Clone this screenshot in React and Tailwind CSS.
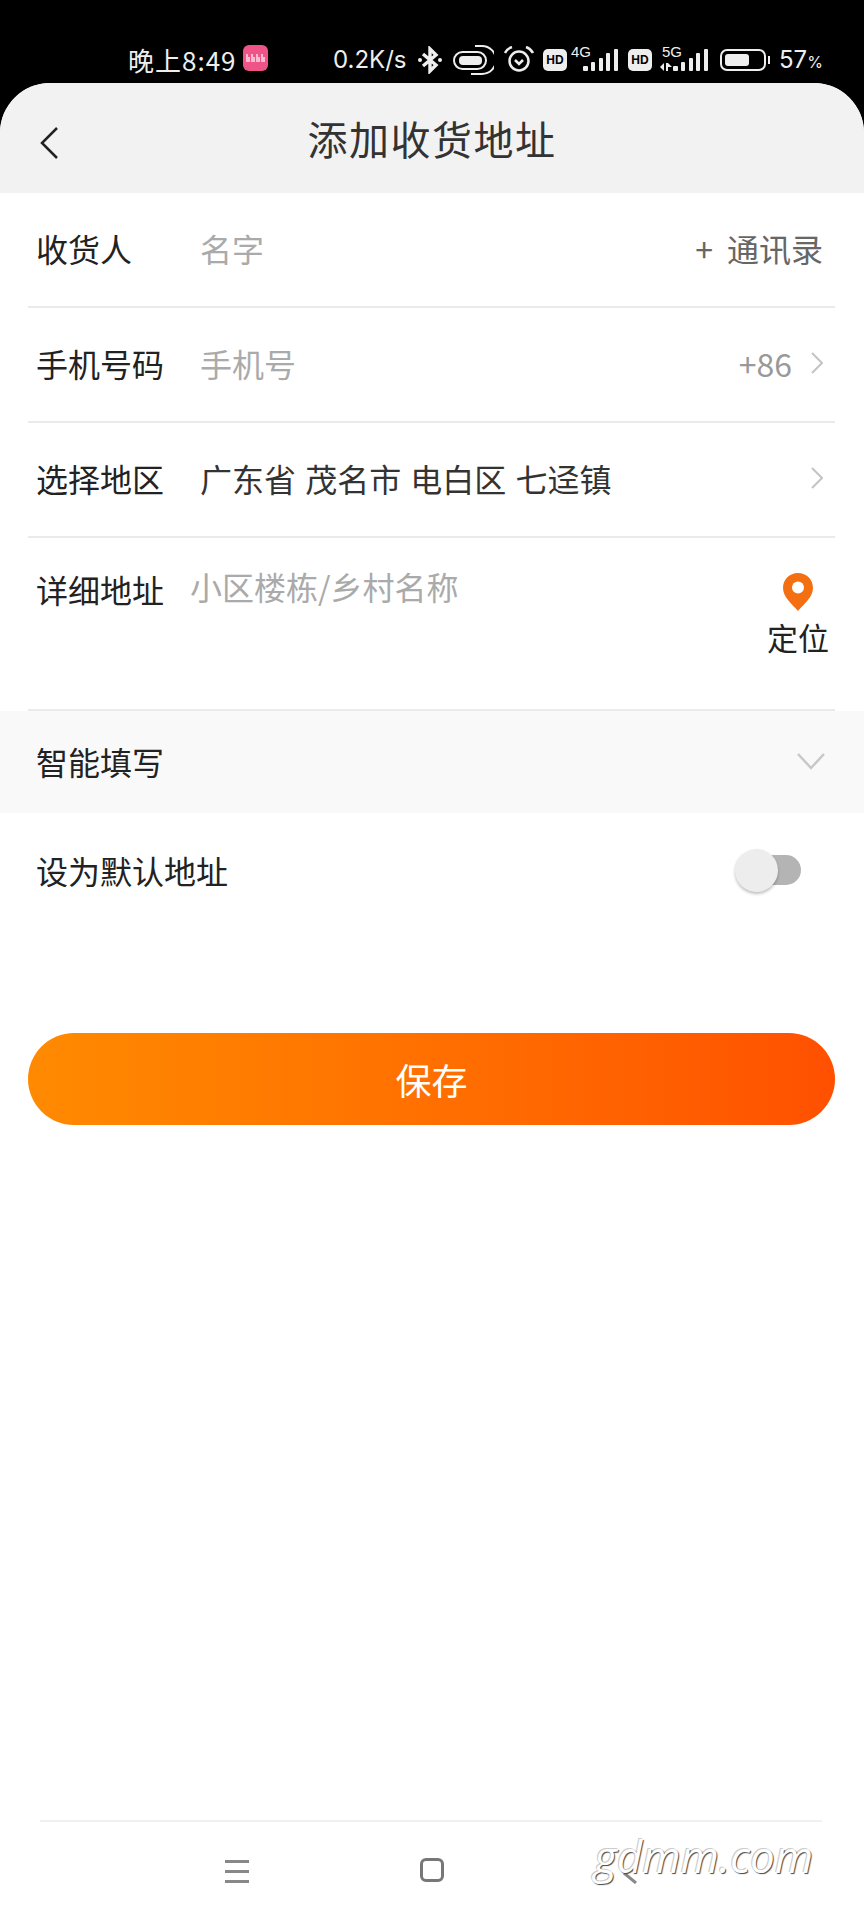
import React from "react";

const font = { fontFamily: '"Noto Sans CJK SC", sans-serif' };

const Signal = () => (
  <svg width="36" height="24" viewBox="0 0 36 24" fill="#eee">
    <rect x="0" y="18" width="5" height="5" rx="1" />
    <rect x="8" y="14" width="4" height="9" rx="1" />
    <rect x="16" y="10" width="4" height="13" rx="1" />
    <rect x="23" y="5" width="4" height="18" rx="1" />
    <rect x="31" y="1" width="4" height="22" rx="1" />
  </svg>
);

const HdBadge = () => (
  <div className="w-[24px] h-[22px] rounded-[5px] bg-[#eee] flex items-center justify-center text-[12px] font-bold text-black font-['Liberation_Sans']">
    HD
  </div>
);

const StatusBar = () => (
  <div className="h-[83px] flex items-start pt-[45px] pl-[128px] text-[#eee] shrink-0">
    <span className="text-[26px] leading-[30px] tracking-[1px] w-[115px] whitespace-nowrap" style={font}>晚上8:49</span>
    <svg width="25" height="26" viewBox="0 0 25 26">
      <rect width="25" height="26" rx="6" fill="#ef5488" />
      <path d="M4 17 V9 M6 17 V12 M9 17 V9 M11 17 V12 M14 17 V9 M16 17 V12 M19 17 V9 M21 17 V12" stroke="#fff" strokeWidth="1.2" fill="none" />
    </svg>
    <span className="ml-[65px] w-[85px] text-[24px] leading-[30px] font-['Inter']">0.2K/s</span>
    <svg className="-ml-[1px] mt-[1px]" width="26" height="28" viewBox="0 0 24 28" fill="none" stroke="#eee" strokeWidth="3.4">
      <path d="M5 8 L18 19 L12 25 V3 L18 9 L5 20" />
      <circle cx="2" cy="14" r="2" fill="#eee" stroke="none" />
      <circle cx="22" cy="14" r="2" fill="#eee" stroke="none" />
    </svg>
    <svg className="ml-[10px]" width="41" height="30" viewBox="0 0 41 30" fill="none" stroke="#eee" strokeWidth="2">
      <rect x="1" y="7" width="32" height="17" rx="8.5" />
      <rect x="6" y="11" width="23" height="9" rx="4" fill="#eee" stroke="none" />
      <path d="M22 1 H29 A13 13 0 0 1 29 29 H18" />
    </svg>
    <svg className="ml-[10px] mt-[1px]" width="30" height="27" viewBox="0 0 30 27" fill="none" stroke="#eee" strokeWidth="2.5">
      <circle cx="15" cy="15" r="9.5" />
      <path d="M1 7 C3 3 5 2 8 1 M29 7 C27 3 25 2 22 1" />
      <path d="M11 14 L15 18 L19 14" />
    </svg>
    <div className="ml-[9px] mt-[4px]"><HdBadge /></div>
    <div className="relative w-[48px] h-[28px] ml-[4px]">
      <span className="absolute left-0 top-0 text-[15px] leading-[14px] font-['Liberation_Sans']">4G</span>
      <div className="absolute left-[12px] top-[3px]"><Signal /></div>
    </div>
    <div className="ml-[9px] mt-[4px]"><HdBadge /></div>
    <div className="relative w-[53px] h-[28px] ml-[4px]">
      <span className="absolute left-[6px] top-0 text-[15px] leading-[14px] font-['Liberation_Sans']">5G</span>
      <svg className="absolute left-[4px] top-[18px]" width="13" height="8" viewBox="0 0 13 8" fill="#eee">
        <path d="M0 4 L4 0 V8 Z M6 0 H8 L12 4 L8 4 V8 H6 Z" />
      </svg>
      <div className="absolute left-[17px] top-[3px]"><Signal /></div>
    </div>
    <div className="ml-[11px] mt-[4px] w-[46px] h-[22px] rounded-[7px] border-2 border-[#eee] p-[3px]">
      <div className="w-[24px] h-full rounded-[3px] bg-[#eee]"></div>
    </div>
    <div className="ml-[2px] mt-[11px] w-[2px] h-[8px] bg-[#eee]"></div>
    <span className="ml-[9px] text-[24px] leading-[30px] font-['Inter'] whitespace-nowrap">57<span className="text-[16px]">%</span></span>
  </div>
);

const Chevron = () => (
  <svg width="12" height="22" viewBox="0 0 12 22" fill="none" stroke="#c4c4c4" strokeWidth="2">
    <path d="M1 1 L11 11 L1 21" />
  </svg>
);

const FormRow = ({ label, children }) => (
  <div className="h-[115px] ml-[28px] mr-[29px] border-b-2 border-[#eaeaea] flex items-center pl-[8px] pr-[12px] pb-[4px]">
    <span className="w-[164px] text-[#222] text-[32px] whitespace-nowrap">{label}</span>
    {children}
  </div>
);

const App = () => {
  return (
    <div className="relative w-[864px] h-[1920px] bg-black flex flex-col overflow-hidden" style={font}>
      <StatusBar />

      <div className="flex-1 bg-white rounded-t-[50px] overflow-hidden flex flex-col">
        {/* Header */}
        <div className="h-[110px] shrink-0 bg-[#f2f2f2] flex items-center justify-center relative">
          <svg className="absolute left-[40px] top-[44px]" width="18" height="32" viewBox="0 0 18 32" fill="none" stroke="#222" strokeWidth="2.5">
            <path d="M17 1 L2 16 L17 31" />
          </svg>
          <span className="text-[40px] text-[#333] tracking-[1.5px]">添加收货地址</span>
        </div>

        <FormRow label="收货人">
          <span className="text-[32px] text-[#aaa] flex-1">名字</span>
          <span className="text-[32px] text-[#666] mr-[14px]">+</span>
          <span className="text-[32px] text-[#666]">通讯录</span>
        </FormRow>

        <FormRow label="手机号码">
          <span className="text-[32px] text-[#aaa] flex-1">手机号</span>
          <span className="text-[32px] text-[#999] mr-[19px]">+86</span>
          <Chevron />
        </FormRow>

        <FormRow label="选择地区">
          <span className="text-[32px] text-[#333] flex-1 [word-spacing:2px]">广东省 茂名市 电白区 七迳镇</span>
          <Chevron />
        </FormRow>

        {/* Detail address */}
        <div className="h-[173px] ml-[28px] mr-[29px] border-b-2 border-[#eaeaea] flex items-start pl-[8px] pr-[6px] pt-[27px]">
          <span className="w-[154px] text-[#222] text-[32px]">详细地址</span>
          <span className="text-[32px] text-[#aaa] flex-1 leading-[46px] -mt-[2px]">小区楼栋/乡村名称</span>
          <div className="flex flex-col items-center w-[62px]">
            <svg className="mt-[8px]" width="30" height="38" viewBox="0 0 30 38">
              <path d="M15 0 C6.5 0 0 6.5 0 15 C0 24 9 31 15 38 C21 31 30 24 30 15 C30 6.5 23.5 0 15 0 Z" fill="#f36f12" />
              <circle cx="15" cy="14.5" r="6" fill="#fff" />
            </svg>
            <span className="text-[31px] text-[#222] leading-[44px] mt-[4px] whitespace-nowrap">定位</span>
          </div>
        </div>

        {/* Smart fill */}
        <div className="h-[102px] shrink-0 bg-[#f9f9f9] flex items-center justify-between pl-[36px] pr-[39px] pb-[3px]">
          <span className="text-[32px] text-[#222]">智能填写</span>
          <svg width="28" height="18" viewBox="0 0 28 18" fill="none" stroke="#c8c8c8" strokeWidth="2.5">
            <path d="M1 2 L14 16 L27 2" />
          </svg>
        </div>

        {/* Default address */}
        <div className="h-[118px] shrink-0 flex items-center justify-between pl-[36px] pr-[63px] pb-[4px]">
          <span className="text-[32px] text-[#222]">设为默认地址</span>
          <div className="relative w-[65px] h-[30px] rounded-full bg-[#b4b4b4]">
            <div className="absolute -left-[1px] -top-[6px] w-[43px] h-[43px] rounded-full bg-[#ededed] shadow-[0_2px_3px_rgba(0,0,0,0.25)]"></div>
          </div>
        </div>

        <button className="ml-[28px] mr-[29px] mt-[102px] h-[92px] shrink-0 rounded-full bg-gradient-to-r from-[#ff8a00] to-[#ff5000] text-white text-[36px]">
          保存
        </button>

        {/* Nav bar */}
        <div className="mt-auto ml-[40px] mr-[42px] h-[100px] border-t-2 border-[#f0f0f0] flex items-start pt-[36px] pl-[185px]">
          <div className="w-[24px] flex flex-col gap-[7px] mt-[2px]">
            <div className="h-[3px] bg-[#888]"></div>
            <div className="h-[3px] bg-[#888]"></div>
            <div className="h-[3px] bg-[#888]"></div>
          </div>
          <div className="ml-[171px] w-[24px] h-[24px] rounded-[6px] border-[3px] border-[#777]"></div>
          <svg className="ml-[179px] mt-[10px]" width="14" height="16" viewBox="0 0 14 16" fill="none" stroke="#888" strokeWidth="3">
            <path d="M13 15 L2 6 L8 0" />
          </svg>
        </div>
      </div>

      {/* Watermark */}
      <span className="absolute left-[594px] top-[1826px] text-[44px] leading-[60px] italic text-white font-['Open_Sans'] [text-shadow:1px_1px_1px_#444,-1px_-1px_0_#ccc]">
        gdmm.com
      </span>
    </div>
  );
};

export default App;
